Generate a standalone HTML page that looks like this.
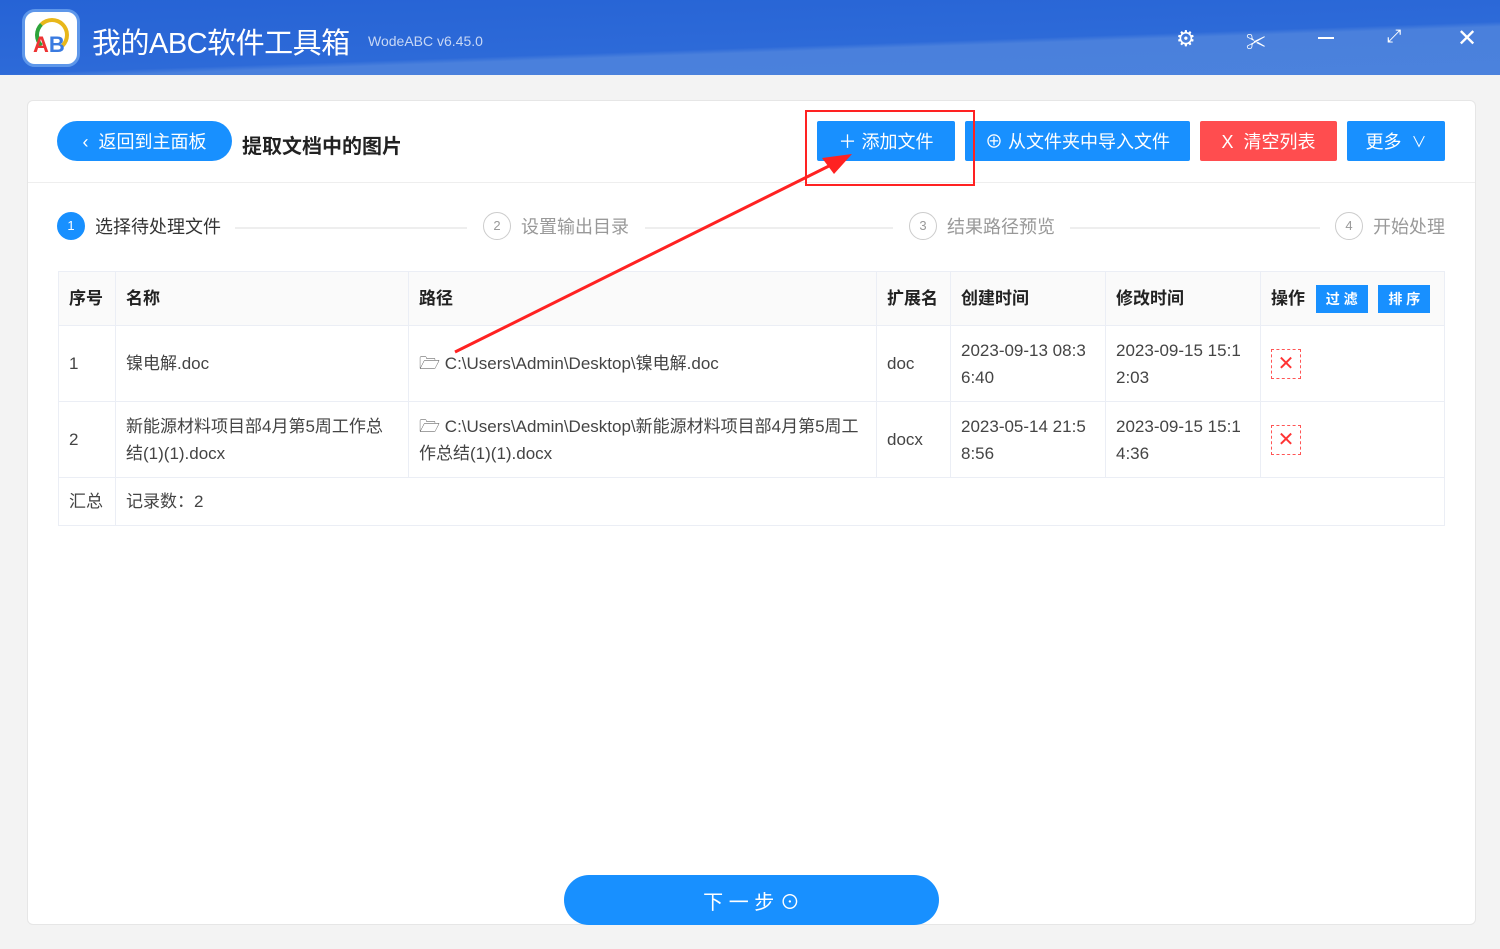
<!DOCTYPE html><html><head><meta charset="utf-8"><style>
*{margin:0;padding:0;box-sizing:border-box}
body{width:1500px;height:949px;background:#f3f3f3;font-family:"Liberation Sans","Noto Sans CJK SC",sans-serif;position:relative;overflow:hidden;color:#333}
.title{position:absolute;left:0;top:0;width:1500px;height:75px;background:linear-gradient(178deg,#2663d5 0%,#2d6ad8 58%,#4a80dc 62%,#4b82dd 100%)}
.a{position:absolute}
.btn{position:absolute;height:40px;color:#fff;font-size:18px;display:flex;align-items:center;justify-content:center;border-radius:2px}
.card{position:absolute;left:27px;top:100px;width:1449px;height:825px;background:#fff;border:1px solid #e6e6e6;border-radius:6px}
table{position:absolute;left:58px;top:271px;width:1387px;border-collapse:collapse;font-size:17px;color:#444}
td,th{border:1px solid #ebeef5;padding:0 10px;text-align:left;vertical-align:middle;line-height:27px}
th{font-weight:bold;color:#222;height:54px;background:#fafafa}
.x{display:inline-block;width:30px;height:30px;border:1px dashed #f55;color:#f33;text-align:center;line-height:28px;font-size:20px}
.step{position:absolute;top:212px;font-size:18px;color:#999;display:flex;align-items:center}
.step i{display:inline-block;width:28px;height:28px;border:1px solid #ccc;border-radius:50%;font-style:normal;font-size:13px;text-align:center;line-height:26px;margin-right:10px}
.ln{position:absolute;top:227px;height:2px;background:#eee}
</style></head><body>
<div class="title"></div>
<div class="a" style="left:22px;top:9px;width:58px;height:58px;background:#fff;border-radius:13px;border:3px solid #5e97ea"><div style="position:absolute;left:10px;top:6px;width:34px;height:34px;border:4px solid #e8b71a;border-left-color:#2ea43b;border-bottom-color:transparent;border-radius:50%"></div><div style="position:absolute;left:8px;top:20px;font-weight:bold;font-size:22px;color:#e33">A<span style="color:#3a7be0">B</span></div></div>
<div class="a" style="left:92px;top:20px;font-size:29px;color:#fff;letter-spacing:-0.5px">我的ABC软件工具箱</div>
<div class="a" style="left:368px;top:33px;font-size:14px;color:#c8d8f5">WodeABC v6.45.0</div>
<div class="a" style="left:1176px;top:26px;color:#fff;font-size:22px">⚙</div>
<div class="a" style="left:1246px;top:26px;color:#fff;font-size:20px">✂</div>
<div class="a" style="left:1318px;top:37px;width:16px;height:2px;background:#fff"></div>
<div class="a" style="left:1387px;top:26px;color:#fff;font-size:18px">⤢</div>
<div class="a" style="left:1457px;top:24px;color:#fff;font-size:24px">✕</div>
<div class="card"></div>
<div class="a" style="left:28px;top:182px;width:1447px;height:1px;background:#eee"></div>
<div class="btn" style="left:57px;top:121px;width:175px;border-radius:20px;background:#1890ff">‹&nbsp;&nbsp;返回到主面板</div>
<div class="a" style="left:242px;top:130px;font-size:20px;font-weight:bold;color:#222">提取文档中的图片</div>
<div class="btn" style="left:817px;top:121px;width:138px;background:#1890ff">＋&nbsp;添加文件</div>
<div class="btn" style="left:965px;top:121px;width:225px;background:#1890ff">⊕&nbsp;从文件夹中导入文件</div>
<div class="btn" style="left:1200px;top:121px;width:137px;background:#ff4d4f">X&nbsp;&nbsp;清空列表</div>
<div class="btn" style="left:1347px;top:121px;width:98px;background:#1890ff">更多&nbsp;&nbsp;<small>∨</small></div>
<div class="a" style="left:805px;top:110px;width:170px;height:76px;border:2px solid #f22"></div>
<div class="step" style="left:57px;color:#333"><i style="background:#1890ff;border-color:#1890ff;color:#fff">1</i>选择待处理文件</div>
<div class="ln" style="left:235px;width:232px"></div>
<div class="step" style="left:483px"><i>2</i>设置输出目录</div>
<div class="ln" style="left:645px;width:248px"></div>
<div class="step" style="left:909px"><i>3</i>结果路径预览</div>
<div class="ln" style="left:1070px;width:250px"></div>
<div class="step" style="left:1335px"><i>4</i>开始处理</div>
<table>
<tr><th style="width:57px">序号</th><th style="width:293px">名称</th><th style="width:468px">路径</th><th style="width:74px">扩展名</th><th style="width:155px">创建时间</th><th style="width:155px">修改时间</th><th>操作 <span style="display:inline-block;background:#1890ff;color:#fff;font-size:14px;padding:0 10px;line-height:28px;margin-left:6px">过 滤</span> <span style="display:inline-block;background:#1890ff;color:#fff;font-size:14px;padding:0 10px;line-height:28px;margin-left:6px">排 序</span></th></tr>
<tr style="height:76px"><td>1</td><td>镍电解.doc</td><td>🗁 C:\Users\Admin\Desktop\镍电解.doc</td><td>doc</td><td>2023-09-13 08:3<br>6:40</td><td>2023-09-15 15:1<br>2:03</td><td><span class="x">✕</span></td></tr>
<tr style="height:76px"><td>2</td><td>新能源材料项目部4月第5周工作总结(1)(1).docx</td><td>🗁 C:\Users\Admin\Desktop\新能源材料项目部4月第5周工作总结(1)(1).docx</td><td>docx</td><td>2023-05-14 21:5<br>8:56</td><td>2023-09-15 15:1<br>4:36</td><td><span class="x">✕</span></td></tr>
<tr style="height:48px"><td>汇总</td><td colspan="6">记录数：2</td></tr>
</table>
<svg class="a" style="left:0;top:0" width="1500" height="949"><line x1="455" y1="352" x2="835" y2="163" stroke="#f22" stroke-width="3"/><polygon points="852,154 822,158 834,174" fill="#f22"/></svg>
<div class="btn" style="left:564px;top:875px;width:375px;height:50px;border-radius:25px;background:#1890ff;font-size:20px">下 一 步 ⊙</div>
</body></html>
